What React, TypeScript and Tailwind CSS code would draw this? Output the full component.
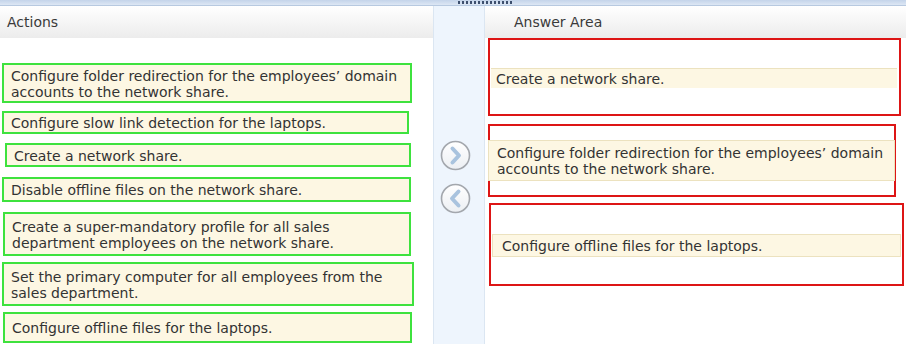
import React from 'react';

const actions = [
  { text: 'Configure folder redirection for the employees’ domain accounts to the network share.', cls: 'mt-[25px] ml-[2px] w-[410px] h-[40px]' },
  { text: 'Configure slow link detection for the laptops.', cls: 'mt-[8px] ml-[2px] w-[407px] h-[23px]' },
  { text: 'Create a network share.', cls: 'mt-[9px] ml-[5px] w-[406px] h-[24px]' },
  { text: 'Disable offline files on the network share.', cls: 'mt-[10px] ml-[2px] w-[409px] h-[25px]' },
  { text: 'Create a super-mandatory profile for all sales department employees on the network share.', cls: 'mt-[10px] ml-[3px] w-[408px] h-[44px]' },
  { text: 'Set the primary computer for all employees from the sales department.', cls: 'mt-[6px] ml-[2px] w-[412px] h-[44px]' },
  { text: 'Configure offline files for the laptops.', cls: 'mt-[6px] ml-[3px] w-[409px] h-[31px]' },
];

const ArrowButton: React.FC<{ dir: 'right' | 'left' }> = ({ dir }) => (
  <svg width="31" height="31" viewBox="0 0 31 31">
    <defs>
      <linearGradient id={`g-${dir}`} x1="0" y1="0" x2="0" y2="1">
        <stop offset="0" stopColor="#ffffff" />
        <stop offset="1" stopColor="#eceff3" />
      </linearGradient>
    </defs>
    <circle cx="15.5" cy="15.5" r="14" fill={`url(#g-${dir})`} stroke="#a3a7ad" strokeWidth="1.6" />
    {dir === 'right' ? (
      <path d="M12.5 8.5 L19 15.5 L12.5 22.5" fill="none" stroke="#a9c3de" strokeWidth="4" strokeLinecap="round" strokeLinejoin="round" />
    ) : (
      <path d="M18.5 8.5 L12 15.5 L18.5 22.5" fill="none" stroke="#a9c3de" strokeWidth="4" strokeLinecap="round" strokeLinejoin="round" />
    )}
  </svg>
);

export default function App() {
  return (
    <div className="w-[906px] h-[344px] overflow-hidden bg-white text-[14px] leading-[16px] text-[#333333]" style={{ fontFamily: '"DejaVu Sans", Verdana, sans-serif' }}>
      {/* top strip */}
      <div className="h-[6px] bg-gradient-to-b from-[#c4d4ea] to-[#dde7f4] border-b border-[#b7c9e0] flex">
        <div className="ml-[458px] mt-[1px] w-[54px] h-[3px] bg-[repeating-linear-gradient(90deg,#3d4f6e_0px,#3d4f6e_2px,transparent_2px,transparent_4px)]" />
      </div>

      <div className="flex h-[338px]">
        {/* Actions */}
        <div className="w-[433px] flex flex-col">
          <div className="h-[32px] bg-gradient-to-b from-white to-[#ececec] flex items-center pl-[7px] text-[#3a3a3a]">
            Actions
          </div>
          {actions.map((a) => (
            <div
              key={a.text}
              className={`${a.cls} border-2 border-[#3ee23e] bg-[#fdf7e3] flex items-center pl-[7px] pr-[2px] pt-[1px]`}
            >
              {a.text}
            </div>
          ))}
        </div>

        {/* middle buttons */}
        <div className="w-[52px] bg-[#eef5fd] border-x border-[#dbe6f2] flex flex-col pl-[6px]">
          <div className="mt-[134px]">
            <ArrowButton dir="right" />
          </div>
          <div className="mt-[12px]">
            <ArrowButton dir="left" />
          </div>
        </div>

        {/* Answer Area */}
        <div className="flex-1 flex flex-col">
          <div className="h-[32px] bg-gradient-to-b from-white to-[#ececec] flex items-center pl-[29px] text-[#3a3a3a]">
            Answer Area
          </div>
          <div className="ml-[3px] w-[413px] h-[78px] border-2 border-[#dd1515] flex flex-col">
            <div className="mt-[28px] ml-[1px] mr-[2px] h-[20px] bg-[#fdf7e3] border-t border-[#ece2bf] flex items-center pl-[5px]">
              Create a network share.
            </div>
          </div>
          <div className="mt-[8px] ml-[3px] w-[408px] h-[73px] border-2 border-[#dd1515] flex flex-col">
            <div className="mt-[14px] -ml-[2px] -mr-[1px] h-[41px] bg-[#fdf7e3] border border-[#ece2bf] flex items-center pl-[8px] pr-[2px]">
              Configure folder redirection for the employees’ domain accounts to the network share.
            </div>
          </div>
          <div className="mt-[6px] ml-[4px] w-[415px] h-[83px] border-2 border-[#dd1515] flex flex-col">
            <div className="mt-[29px] ml-[1px] mr-[1px] h-[23px] bg-[#fdf7e3] border border-[#ece2bf] flex items-center pl-[9px]">
              Configure offline files for the laptops.
            </div>
          </div>
        </div>
      </div>
    </div>
  );
}
